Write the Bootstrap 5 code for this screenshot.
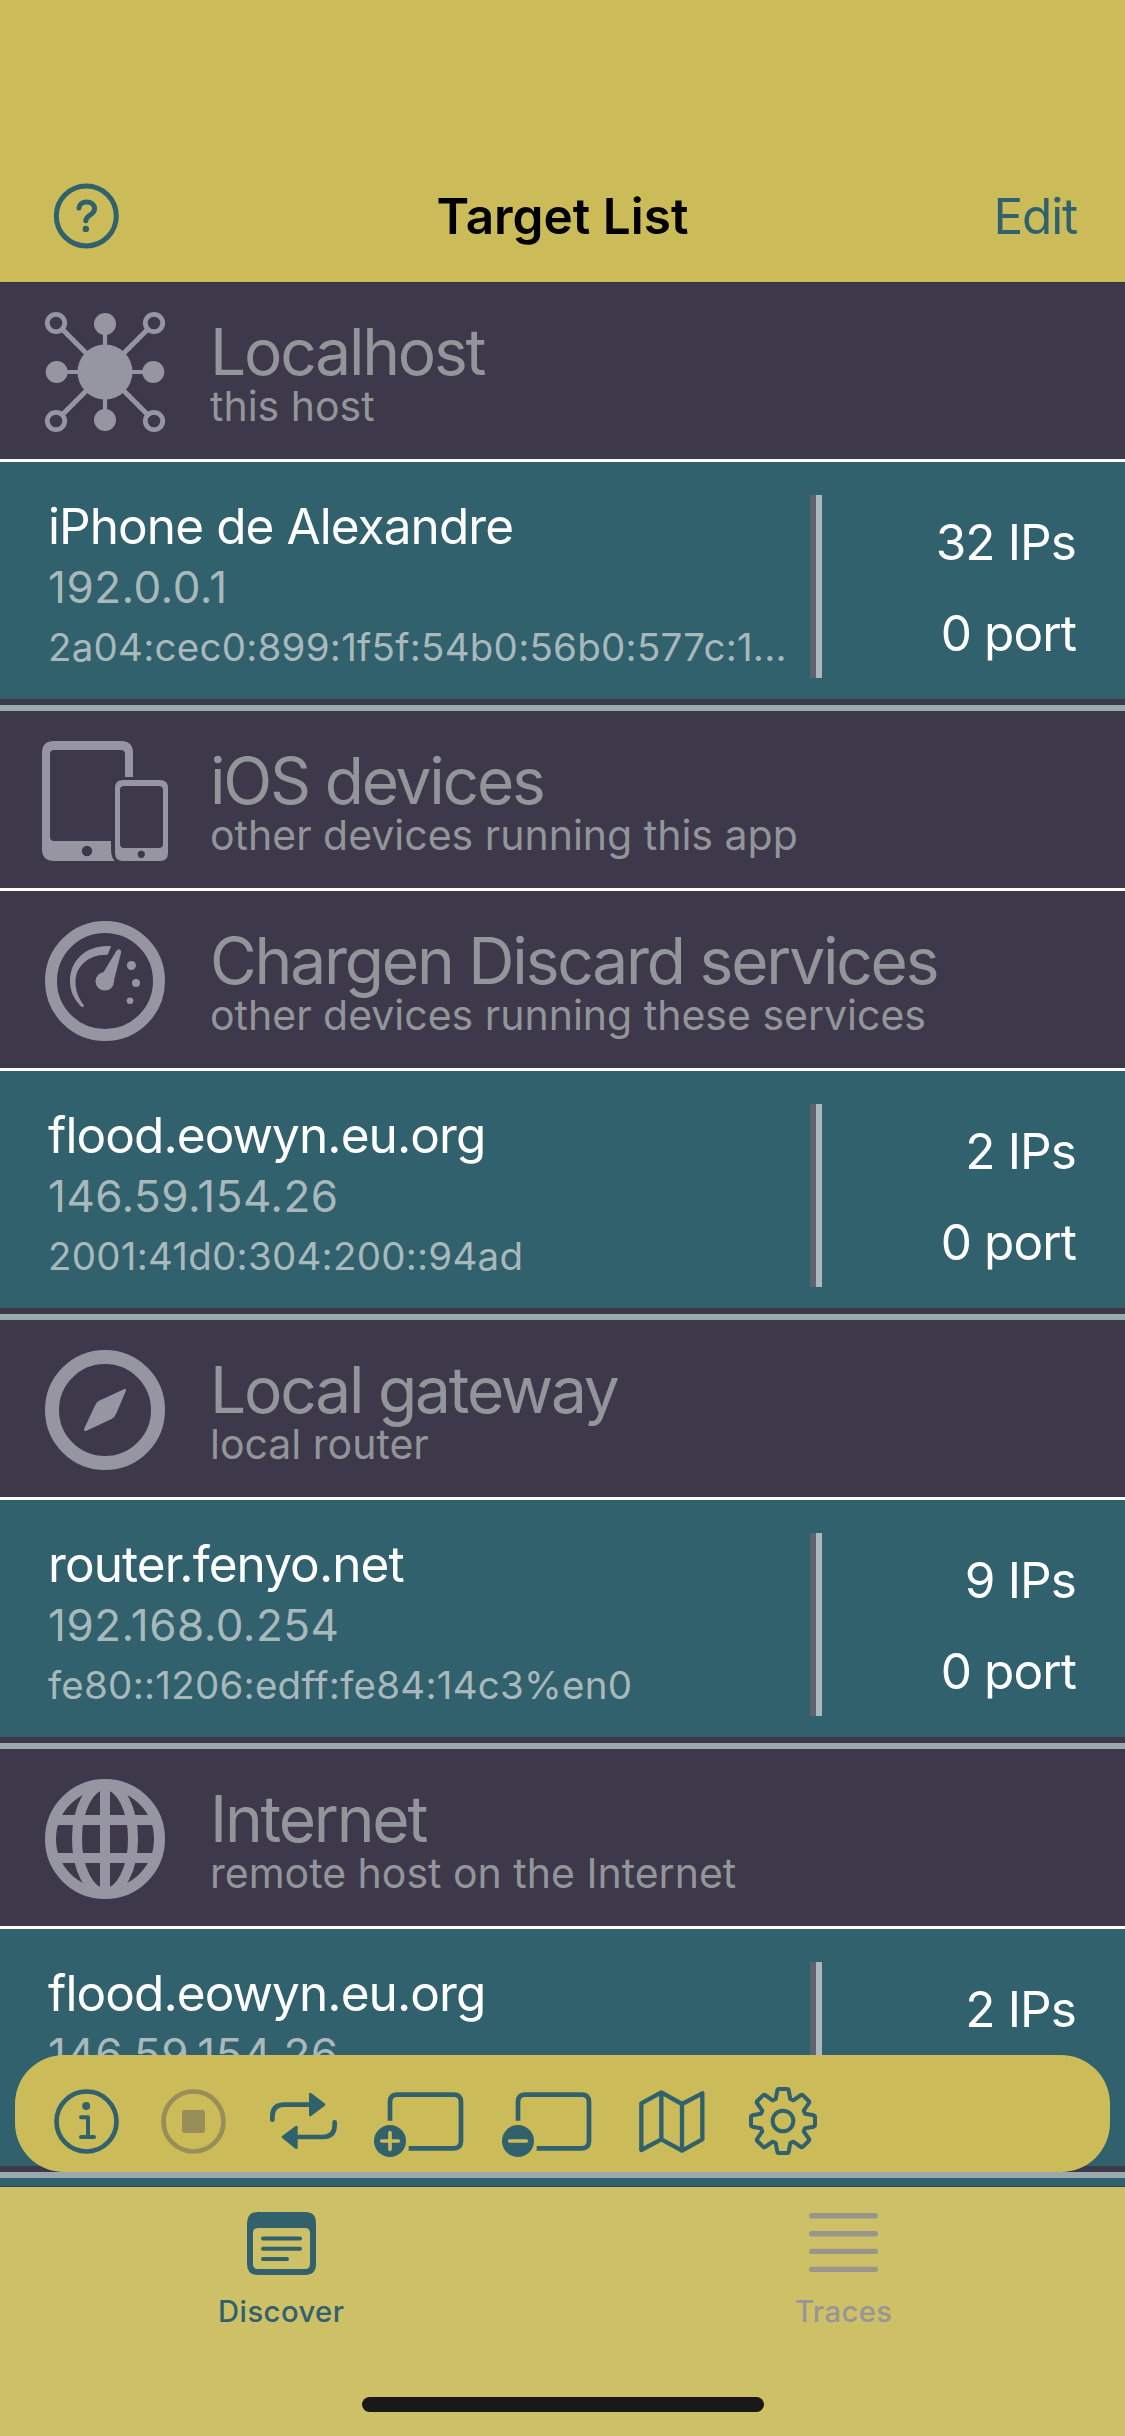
<!DOCTYPE html>
<html lang="en">
<head>
<meta charset="utf-8">
<meta name="viewport" content="width=device-width, initial-scale=1">
<title>Target List</title>
<link href="https://cdn.jsdelivr.net/npm/bootstrap@5.3.0/dist/css/bootstrap.min.css" rel="stylesheet">
<style>
:root{--sand:#cbbc59;--sand-tab:#cdc067;--teal:#31616d;--plum:#3d394b;--mist:#a9b8bb;--glyph:#9596a2;--label:#929599}
body{width:1125px;height:2436px;overflow:hidden;background:var(--teal);font-family:Inter,"Liberation Sans",sans-serif}
svg{display:block;flex:none;overflow:visible}
.top-bar{height:282px;padding:174px 48px 0 45px;background:var(--sand)}
.top-bar>*{flex:1 1 0}
.bar-title{font-size:49.5px;font-weight:600;line-height:60px;color:#000;padding:12px 0 0 3px}
.bar-action{display:block;padding-top:12px;font-size:49.5px;line-height:60px;letter-spacing:-1.2px;color:var(--teal);text-decoration:none}
.target-area{height:1905px;border-bottom:1px solid #25424f}
.group-head{height:180px;padding:30px 45px 0;background:var(--plum);border-bottom:3px solid #fff;color:var(--label)}
.group-head:first-child{border-top:1px solid #2a3540;padding-top:29px}
.group-head svg{fill:var(--glyph);stroke:none}
.group-text{padding:10px 0 0 45px;white-space:nowrap}
.g-title{font-size:64px;line-height:60px;letter-spacing:-2.2px}
.g-sub{font-size:41px;line-height:46px;margin-top:1px}
.target-row{height:249px;background:var(--teal);border-bottom:6px solid #9aaaac;box-shadow:inset 0 -6px var(--plum);color:#fff;padding:33px 49px 0 48px;white-space:nowrap}
.t-main{width:762px;padding-top:1px}
.t-name{font-size:49.5px;line-height:60px;letter-spacing:-.92px}
.t-v4{font-size:44px;line-height:58px;letter-spacing:.48px;margin-top:2px;color:var(--mist)}
.t-v6{font-size:38.5px;line-height:56px;letter-spacing:.24px;margin-top:3px;color:var(--mist)}
.t-rule{width:12px;height:183px;border-left:6px solid #5e6370;background:var(--mist)}
.t-count{font-size:49.5px;line-height:60px;letter-spacing:-.9px;padding-top:17px}
.t-count div+div{margin-top:31px}
.tools{left:15px;right:15px;bottom:14px;height:117px;border-radius:49px;background:var(--sand)}
.line-art{fill:none;stroke:var(--teal);stroke-width:14;stroke-linecap:round;stroke-linejoin:round}
.solid{fill:var(--teal)}
.off{stroke:#988e57}
.tab-bar{height:249px;background:var(--sand-tab)}
.tab-item{padding-top:25px;font-size:29.2px;font-weight:500;letter-spacing:.45px;color:var(--teal);text-decoration:none}
.tab-item.idle{color:#979595}
.tab-item span{line-height:36px;margin-top:18.500px}
.home-bar{width:402px;height:15px;border-radius:8px;background:#191919;bottom:24px;left:362px}
</style>
<script src="https://cdn.jsdelivr.net/npm/bootstrap@5.3.0/dist/js/bootstrap.bundle.min.js"></script>
</head>
<body class="d-flex flex-column">
<header class="top-bar d-flex">
  <a href="#" aria-label="Help" class="d-block">
    <svg width="84" height="84" viewBox="45 174.5 84 84" class="line-art"><g stroke-width="5"><circle cx="86.3" cy="216.4" r="30"/><path d="M79 208.4C79.4 204.4 82.6 202.5 86.5 202.5C91.3 202.5 94.6 205.3 94.6 209.3C94.6 215.8 85.8 215.2 85.8 221.3"/></g><circle cx="85.8" cy="229.4" r="3.2" class="solid" stroke="none"/></svg>
  </a>
  <div class="bar-title text-center text-nowrap">Target List</div>
  <div class="text-end"><a href="#" class="bar-action">Edit</a></div>
</header>

<main class="target-area position-relative overflow-hidden flex-shrink-0">
  <section class="group-head d-flex">
    <svg width="120" height="120" viewBox="0 0 120 120"><g stroke="#9596a2" stroke-width="5"><path d="M18 18L102 102M102 18L18 102"/><path stroke-width="4.2" d="M60 12V108M12 60H108"/></g><circle cx="60" cy="60" r="27.5"/><circle cx="60" cy="12" r="11"/><circle cx="60" cy="108" r="11"/><circle cx="11.7" cy="60" r="11"/><circle cx="108.3" cy="60" r="11"/><g stroke="#9596a2" stroke-width="4.8" fill="#3d394b"><circle cx="11" cy="11" r="8.7"/><circle cx="109" cy="11" r="8.7"/><circle cx="11" cy="109" r="8.7"/><circle cx="109" cy="109" r="8.7"/></g></svg>
    <div class="group-text"><div class="g-title">Localhost</div><div class="g-sub">this host</div></div>
  </section>
  <article class="target-row d-flex">
    <div class="t-main"><div class="t-name">iPhone de Alexandre</div><div class="t-v4">192.0.0.1</div><div class="t-v6">2a04:cec0:899:1f5f:54b0:56b0:577c:1...</div></div>
    <div class="t-rule"></div>
    <div class="t-count ms-auto text-end"><div>32 IPs</div><div>0 port</div></div>
  </article>

  <section class="group-head d-flex">
    <svg width="120" height="120" viewBox="0 0 120 120"><path fill-rule="evenodd" d="M9 0H76Q88 0 88 12V120H9Q-3 120-3 108V12Q-3 0 9 0ZM9 9Q5 9 5 13V96Q5 100 9 100H80V13Q80 9 76 9ZM42 104.8A5.2 5.2 0 1 0 42 115.2A5.2 5.2 0 1 0 42 104.8Z"/><path fill="#3d394b" d="M66 36H92V122H72Q66 118 66 108Z"/><path fill-rule="evenodd" d="M78 39H115Q123 39 123 47V112Q123 120 115 120H78Q70 120 70 112V47Q70 39 78 39ZM79 45Q75 45 75 49V103Q75 107 79 107H114Q118 107 118 103V49Q118 45 114 45ZM96.300 109.700A3.600 3.600 0 1 0 96.300 116.900A3.600 3.600 0 1 0 96.300 109.700Z"/></svg>
    <div class="group-text"><div class="g-title">iOS devices</div><div class="g-sub">other devices running this app</div></div>
  </section>
  <section class="group-head d-flex">
    <svg width="120" height="120" viewBox="0 0 120 120"><circle cx="60" cy="60" r="54" fill="none" stroke="#9596a2" stroke-width="12"/><path d="M66 25.200L62.700 33.800C44 33 31 45 30.500 60C30.200 70 34 78 39 84.500Q38.500 87 36 85.500C28 77 25 69 25 60C25 39 42 23.500 66 25.200Z"/><path d="M58 52L71.300 30Q73 27.500 75 28.600Q76.500 29.500 76 32L68.800 60Z"/><circle cx="59.800" cy="60.300" r="9.300"/><circle cx="86.400" cy="44.500" r="4.500"/><circle cx="91" cy="62" r="4"/><circle cx="85" cy="79.700" r="3.300"/></svg>
    <div class="group-text"><div class="g-title">Chargen Discard services</div><div class="g-sub">other devices running these services</div></div>
  </section>
  <article class="target-row d-flex">
    <div class="t-main"><div class="t-name">flood.eowyn.eu.org</div><div class="t-v4">146.59.154.26</div><div class="t-v6">2001:41d0:304:200::94ad</div></div>
    <div class="t-rule"></div>
    <div class="t-count ms-auto text-end"><div>2 IPs</div><div>0 port</div></div>
  </article>

  <section class="group-head d-flex">
    <svg width="120" height="120" viewBox="0 0 120 120"><circle cx="60" cy="60" r="53" fill="none" stroke="#9596a2" stroke-width="14"/><path d="M79.500 38.900Q81.500 38.300 81 40.500L71.300 63.500Q70 67 66.500 69L41 81Q38.500 81.500 39 79L49.500 56.500Q50.700 53 53.500 51Z"/></svg>
    <div class="group-text"><div class="g-title">Local gateway</div><div class="g-sub">local router</div></div>
  </section>
  <article class="target-row d-flex">
    <div class="t-main"><div class="t-name">router.fenyo.net</div><div class="t-v4">192.168.0.254</div><div class="t-v6">fe80::1206:edff:fe84:14c3%en0</div></div>
    <div class="t-rule"></div>
    <div class="t-count ms-auto text-end"><div>9 IPs</div><div>0 port</div></div>
  </article>

  <section class="group-head d-flex">
    <svg width="120" height="120" viewBox="0 0 120 120"><g fill="none" stroke="#9596a2" stroke-width="10"><circle cx="60" cy="60" r="54.500" stroke-width="11"/><ellipse cx="60" cy="60" rx="28" ry="54"/><path d="M60 4V116M10 41H110M10 79H110"/></g></svg>
    <div class="group-text"><div class="g-title">Internet</div><div class="g-sub">remote host on the Internet</div></div>
  </section>
  <article class="target-row d-flex">
    <div class="t-main"><div class="t-name">flood.eowyn.eu.org</div><div class="t-v4">146.59.154.26</div></div>
    <div class="t-rule"></div>
    <div class="t-count ms-auto text-end"><div>2 IPs</div></div>
  </article>

  <nav class="tools position-absolute d-flex" aria-label="Tools">
    <svg width="125" height="117" viewBox="45 75 375 351" class="line-art"><circle cx="259.500" cy="274.500" r="90"/><path stroke-width="12" d="M243 262H264V321M243 321H282"/><circle cx="258.500" cy="228" r="12" class="solid" stroke="none"/></svg>
    <svg width="107" height="117" viewBox="420 75 321 351" class="line-art off"><circle cx="580.500" cy="274.500" r="90"/><rect x="546" y="240" width="69" height="69" rx="8" fill="#988e57" stroke="none"/></svg>
    <svg width="106" height="117" viewBox="741 75 318 351" class="line-art"><path d="M817 269V260Q817 224 853 224H930M1004 277V285Q1004 321 968 321H890"/><path class="solid" stroke-width="8" d="M931 192L972 224L931 255ZM889 291L849 321L889 353Z"/></svg>
    <svg width="117" height="117" viewBox="1059 75 351 351" class="line-art"><path stroke-linecap="butt" d="M1170 272V216Q1170 194 1192 194H1361Q1383 194 1383 216V333Q1383 355 1361 355H1226"/><circle cx="1170" cy="333" r="48" class="solid" stroke="none"/><path stroke="#cbbc59" stroke-width="11" d="M1145 333H1195M1170 308V358"/></svg>
    <svg width="140" height="117" viewBox="60 75 420 351" class="line-art"><path stroke-linecap="butt" d="M204 272V216Q204 194 226 194H395Q417 194 417 216V333Q417 355 395 355H260"/><circle cx="204" cy="333" r="48" class="solid" stroke="none"/><path stroke="#cbbc59" stroke-width="11" d="M179 333H229"/></svg>
    <svg width="120" height="117" viewBox="480 75 360 351" class="line-art"><path stroke-width="13" d="M574 220L634 187L696 222L757 190V328L696 362L634 328L574 360ZM634 187V328M696 222V362"/></svg>
    <svg width="100" height="117" viewBox="840 75 300 351" class="line-art"><g transform="translate(999 273)" stroke-width="12"><circle r="31"/><path d="M-22-66L-17-92Q-16-96-12-96H12Q16-96 17-92L22-66L31-62L54-78Q57-80 60-77L77-60Q80-57 78-54L62-31L66-22L92-17Q96-16 96-12V12Q96 16 92 17L66 22L62 31L78 54Q80 57 77 60L60 77Q57 80 54 78L31 62L22 66L17 92Q16 96 12 96H-12Q-16 96-17 92L-22 66L-31 62L-54 78Q-57 80-60 77L-77 60Q-80 57-78 54L-62 31L-66 22L-92 17Q-96 16-96 12V-12Q-96-16-92-17L-66-22L-62-31L-78-54Q-80-57-77-60L-60-77Q-57-80-54-78L-31-62Z"/></g></svg>
  </nav>
</main>

<footer class="tab-bar d-flex position-relative">
  <a href="#" class="tab-item d-flex flex-column align-items-center w-50">
    <svg width="69" height="63" viewBox="0 0 69 63"><path class="solid" fill-rule="evenodd" d="M11 0H58Q69 0 69 11V52Q69 63 58 63H11Q0 63 0 52V11Q0 0 11 0ZM11 16Q6 16 6 21V52Q6 57 11 57H58Q63 57 63 52V21Q63 16 58 16Z"/><path fill="none" stroke="#31616d" stroke-linecap="round" stroke-width="4" d="M16 26.500H53M16 36.800H53M16 47H40"/></svg>
    <span>Discover</span>
  </a>
  <a href="#" class="tab-item idle d-flex flex-column align-items-center w-50">
    <svg width="69" height="63" viewBox="0 0 69 63"><path fill="none" stroke="#9a958a" stroke-width="5.400" stroke-linecap="round" d="M2.700 3.700H66.300M2.700 21.700H66.300M2.700 39.400H66.300M2.700 57.400H66.300"/></svg>
    <span>Traces</span>
  </a>
  <div class="home-bar position-absolute"></div>
</footer>
</body>
</html>
